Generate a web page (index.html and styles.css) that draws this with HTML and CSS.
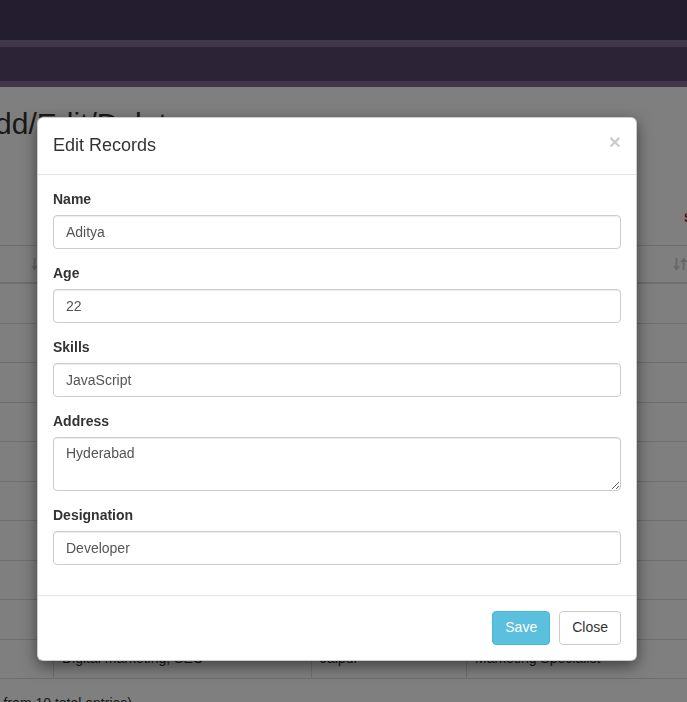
FILE: index.html
```html
<!DOCTYPE html>
<html lang="en">
<head>
<meta charset="utf-8">
<title>Edit Records</title>
<link rel="stylesheet" href="styles.css">
</head>
<body>
<div class="page">
  <div class="nav-top"></div>
  <div class="nav-sep"></div>
  <div class="nav-sub"></div>
  <div class="nav-sep"></div>

  <h1 class="page-title">Add/Edit/Delete</h1>

  <div class="tools"><span class="tool-label">Search:</span></div>

  <div class="table">
    <div class="row head">
      <div class="cell"><svg class="sort" viewBox="0 0 14 14" width="14" height="14"><path d="M3.5 1v11M1 9l2.5 3L6 9M10.5 13V2M8 5l2.5-3L13 5"/></svg></div>
      <div class="cell"><span>Skills</span><svg class="sort" viewBox="0 0 14 14" width="14" height="14"><path d="M3.5 1v11M1 9l2.5 3L6 9M10.5 13V2M8 5l2.5-3L13 5"/></svg></div>
      <div class="cell"><span>Address</span><svg class="sort" viewBox="0 0 14 14" width="14" height="14"><path d="M3.5 1v11M1 9l2.5 3L6 9M10.5 13V2M8 5l2.5-3L13 5"/></svg></div>
      <div class="cell"><span>Designation</span><svg class="sort" viewBox="0 0 14 14" width="14" height="14"><path d="M3.5 1v11M1 9l2.5 3L6 9M10.5 13V2M8 5l2.5-3L13 5"/></svg></div>
      <div class="cell"><span>Action</span></div>
    </div>
    <div class="row"><div class="cell"></div><div class="cell">JavaScript</div><div class="cell">Hyderabad</div><div class="cell">Developer</div><div class="cell"></div></div>
    <div class="row"><div class="cell"></div><div class="cell">Java, Spring</div><div class="cell">Pune</div><div class="cell">Backend Engineer</div><div class="cell"></div></div>
    <div class="row"><div class="cell"></div><div class="cell">Python</div><div class="cell">Chennai</div><div class="cell">Data Analyst</div><div class="cell"></div></div>
    <div class="row"><div class="cell"></div><div class="cell">UI/UX Design</div><div class="cell">Bangalore</div><div class="cell">Designer</div><div class="cell"></div></div>
    <div class="row"><div class="cell"></div><div class="cell">PHP, MySQL</div><div class="cell">Delhi</div><div class="cell">Web Developer</div><div class="cell"></div></div>
    <div class="row"><div class="cell"></div><div class="cell">Testing</div><div class="cell">Mumbai</div><div class="cell">QA Engineer</div><div class="cell"></div></div>
    <div class="row"><div class="cell"></div><div class="cell">Angular</div><div class="cell">Kolkata</div><div class="cell">Frontend Dev</div><div class="cell"></div></div>
    <div class="row"><div class="cell"></div><div class="cell">DevOps</div><div class="cell">Noida</div><div class="cell">SRE</div><div class="cell"></div></div>
    <div class="row"><div class="cell"></div><div class="cell">Accounting</div><div class="cell">Lucknow</div><div class="cell">Accountant</div><div class="cell"></div></div>
    <div class="row"><div class="cell"></div><div class="cell">Digital marketing, SEO</div><div class="cell">Jaipur</div><div class="cell">Marketing Specialist</div><div class="cell"></div></div>
  </div>

  <div class="info">(filtered from 10 total entries)</div>
</div>

<div class="backdrop"></div>

<div class="modal">
  <div class="modal-content">
    <div class="modal-header">
      <h4 class="modal-title">Edit Records</h4>
      <button type="button" class="close">×</button>
    </div>
    <div class="modal-body">
      <div class="form-group">
        <label class="label">Name</label>
        <input class="form-control" type="text" value="Aditya">
      </div>
      <div class="form-group">
        <label class="label">Age</label>
        <input class="form-control" type="text" value="22">
      </div>
      <div class="form-group">
        <label class="label">Skills</label>
        <input class="form-control" type="text" value="JavaScript">
      </div>
      <div class="form-group">
        <label class="label">Address</label>
        <textarea class="form-control textarea" rows="2">Hyderabad</textarea>
      </div>
      <div class="form-group">
        <label class="label">Designation</label>
        <input class="form-control" type="text" value="Developer">
      </div>
    </div>
    <div class="modal-footer">
      <button type="button" class="btn btn-info">Save</button>
      <button type="button" class="btn btn-default">Close</button>
    </div>
  </div>
</div>
</body>
</html>
```

FILE: styles.css
```css
* {
  box-sizing: border-box;
}

html, body {
  margin: 0;
  overflow: hidden;
}

body {
  font-family: "Liberation Sans", Arial, Helvetica, sans-serif;
  font-size: 14px;
  line-height: 1.42857;
  color: #333;
  background: #fff;
}

.page {
  width: 900px;
}

.nav-top {
  height: 40px;
  background: #48385f;
}

.nav-sep {
  height: 6.5px;
  background: #827296;
}

.nav-sub {
  height: 34px;
  background: #58466e;
}

.page-title {
  margin: 20px 0 10px -25px;
  font-size: 30px;
  font-weight: normal;
  line-height: 1.1;
  white-space: nowrap;
}

.tools {
  height: 95px;
  padding-top: 61px;
  display: flex;
  align-items: flex-start;
}

.tool-label {
  margin-left: 684px;
  font-size: 12px;
  line-height: 14px;
  font-weight: bold;
  color: #8b2a2a;
}

.table {
  border-top: 1px solid #ddd;
}

.row {
  display: grid;
  grid-template-columns: 53px 258px 155px 229px 205px;
  height: 39.5px;
  border-bottom: 1px solid #ddd;
}

.row.head {
  height: 38px;
  border-bottom: 2px solid #ddd;
  font-weight: bold;
}

.cell {
  padding: 0 8px;
  display: flex;
  align-items: center;
  white-space: nowrap;
  overflow: hidden;
}

.cell + .cell {
  border-left: 1px solid #ddd;
}

.head .cell {
  justify-content: space-between;
}

.head .cell:first-child {
  justify-content: flex-end;
}

.sort {
  flex: none;
  fill: none;
  stroke: #cccccc;
  stroke-width: 1.8;
}

.info {
  padding-top: 15px;
  margin-left: -47px;
  white-space: nowrap;
}

.backdrop {
  position: fixed;
  inset: 0;
  background: rgba(0, 0, 0, 0.5);
}

.modal {
  position: fixed;
  inset: 0;
  padding: 117px 0 0 37px;
}

.modal-content {
  width: 600px;
  background: #fff;
  border: 1px solid rgba(0, 0, 0, 0.2);
  border-radius: 6px;
  box-shadow: 0 5px 15px rgba(0, 0, 0, 0.5);
}

.modal-header {
  display: flex;
  justify-content: space-between;
  align-items: flex-start;
  padding: 15px;
  border-bottom: 1px solid #e5e5e5;
}

.modal-title {
  margin: 0;
  font-size: 18px;
  font-weight: normal;
  line-height: 1.42857;
  color: #333;
}

.close {
  margin-top: -2px;
  padding: 0;
  border: 0;
  background: transparent;
  font-family: inherit;
  font-size: 21px;
  font-weight: bold;
  line-height: 1;
  color: #000;
  opacity: 0.2;
}

.modal-body {
  padding: 15px;
}

.form-group {
  margin-bottom: 15px;
}

.label {
  display: inline-block;
  margin-bottom: 5px;
  font-weight: bold;
}

.form-control {
  display: block;
  width: 100%;
  height: 34px;
  padding: 6px 12px;
  font-family: inherit;
  font-size: 14px;
  line-height: 1.42857;
  color: #555;
  background: #fff;
  border: 1px solid #ccc;
  border-radius: 4px;
  box-shadow: inset 0 1px 1px rgba(0, 0, 0, 0.075);
  margin: 0;
}

.textarea {
  height: 54px;
  resize: vertical;
}

.modal-footer {
  display: flex;
  justify-content: flex-end;
  gap: 9px;
  padding: 15px;
  border-top: 1px solid #e5e5e5;
}

.btn {
  height: 34px;
  padding: 6px 12px;
  font-family: inherit;
  font-size: 14px;
  line-height: 1.42857;
  border: 1px solid transparent;
  border-radius: 4px;
}

.btn-info {
  color: #fff;
  background: #5bc0de;
  border-color: #46b8da;
}

.btn-default {
  color: #333;
  background: #fff;
  border-color: #ccc;
}
```
